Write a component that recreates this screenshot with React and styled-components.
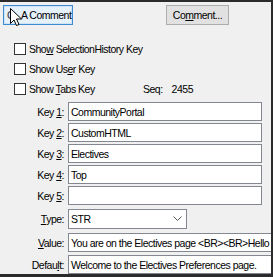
import React from 'react';
import styled, { createGlobalStyle } from 'styled-components';

const GlobalStyle = createGlobalStyle`
    html, body {
        margin: 0;
        padding: 0;
        background: #f0f0f0;
        overflow: hidden;
    }
`;

const Frame = styled.div`
    position: relative;
    width: 273px;
    height: 277px;
    box-sizing: border-box;
    border-top: 2px solid #2b2b2b;
    border-right: 2px solid #2b2b2b;
    border-bottom: 3px solid #2b2b2b;
    background: #f0f0f0;
    overflow: hidden;
    font-family: Tahoma, "Liberation Sans", Arial, sans-serif;
    font-size: 10.5px;
    letter-spacing: -0.5px;
    color: #000;
`;

const TopBar = styled.div`
    display: flex;
    align-items: center;
    padding: 3px 0 0 3px;
`;

const Button = styled.div`
    box-sizing: border-box;
    height: 20px;
    width: ${p => p.$w}px;
    margin-left: ${p => p.$ml || 0}px;
    padding-left: ${p => p.$active ? 3 : 0}px;
    display: flex;
    align-items: center;
    justify-content: ${p => p.$active ? 'flex-start' : 'center'};
    background: ${p => p.$active ? '#e5f1fb' : '#e1e1e1'};
    border: 1px solid ${p => p.$active ? '#3c8bd0' : '#adadad'};
    box-shadow: ${p => p.$active ? 'inset 0 0 0 1px #cfe3f5' : 'none'};
`;

const ButtonIcon = styled.span`
    display: inline-block;
    width: 14px;
    color: #333;
`;

const CheckList = styled.div`
    display: flex;
    flex-direction: column;
    gap: 8px;
    padding-left: 14px;
    margin-top: 18px;
`;

const CheckRow = styled.div`
    display: flex;
    align-items: center;
    height: 12px;
`;

const Box = styled.span`
    box-sizing: border-box;
    width: 12px;
    height: 12px;
    border: 1px solid #333;
    background: #fff;
    margin-right: 3px;
    flex: none;
`;

const CheckLabel = styled.span`
    width: ${p => p.$w ? `${p.$w}px` : 'auto'};
    white-space: nowrap;
`;

const Seq = styled.span`
    display: flex;
    gap: 9px;
`;

const Fields = styled.div`
    display: grid;
    grid-template-columns: 68px 1fr;
    margin-top: 7px;
`;

const Label = styled.div`
    height: ${p => p.$h || 19}px;
    margin-top: ${p => p.$mt || 0}px;
    padding-right: 4px;
    display: flex;
    align-items: center;
    justify-content: flex-end;
    white-space: nowrap;
`;

const Input = styled.div`
    box-sizing: border-box;
    height: ${p => p.$h || 19}px;
    margin-top: ${p => p.$mt || 0}px;
    width: ${p => p.$w}px;
    border: 1px solid #828790;
    background: #fff;
    padding-left: 2px;
    display: flex;
    align-items: center;
    white-space: nowrap;
    overflow: hidden;
`;

const Select = styled(Input)`
    justify-content: space-between;
    padding-right: 4px;
`;

const Cursor = styled.svg`
    position: absolute;
    left: 9px;
    top: 5px;
`;

const fields = [
    { label: 'Key', key: '1', value: 'CommunityPortal', mt: 0 },
    { label: 'Key', key: '2', value: 'CustomHTML', mt: 2 },
    { label: 'Key', key: '3', value: 'Electives', mt: 2 },
    { label: 'Key', key: '4', value: 'Top', mt: 2 },
    { label: 'Key', key: '5', value: '', mt: 2 },
];

export default function App() {
    return (
        <>
            <GlobalStyle />
            <Frame>
                <TopBar>
                    <Button $w={70} $active>
                        <ButtonIcon>C</ButtonIcon><span>A Comment</span>
                    </Button>
                    <Button $w={63} $ml={93}><span>Co<u>m</u>ment...</span></Button>
                </TopBar>
                <CheckList>
                    <CheckRow>
                        <Box /><CheckLabel>Sho<u>w</u> SelectionHistory Key</CheckLabel>
                    </CheckRow>
                    <CheckRow>
                        <Box /><CheckLabel>Show Us<u>e</u>r Key</CheckLabel>
                    </CheckRow>
                    <CheckRow>
                        <Box /><CheckLabel $w={114}>Show <u>T</u>abs Key</CheckLabel>
                        <Seq><span>Seq:</span><span>2455</span></Seq>
                    </CheckRow>
                </CheckList>
                <Fields>
                    {fields.map((f, i) => (
                        <React.Fragment key={i}>
                            <Label $mt={f.mt}><span>{f.label} <u>{f.key}</u>:</span></Label>
                            <Input $mt={f.mt} $w={194}>{f.value}</Input>
                        </React.Fragment>
                    ))}
                    <Label $mt={4} $h={20}><span><u>T</u>ype:</span></Label>
                    <Select $mt={4} $h={20} $w={119}>
                        <span>STR</span>
                        <svg width="9" height="6" viewBox="0 0 9 6">
                            <path d="M0.5 0.5 L4.5 4.5 L8.5 0.5" fill="none" stroke="#555" strokeWidth="1" />
                        </svg>
                    </Select>
                    <Label $mt={4}><span><u>V</u>alue:</span></Label>
                    <Input $mt={4} $w={240}>You are on the Electives page &lt;BR&gt;&lt;BR&gt;Hello</Input>
                    <Label $mt={3}><span>Defau<u>l</u>t:</span></Label>
                    <Input $mt={3} $w={240}>Welcome to the Electives Preferences page.</Input>
                </Fields>
                <Cursor width="14" height="20" viewBox="0 0 14 20">
                    <path d="M1.5 1.5 L1.5 16.5 L5 13 L7.5 18.5 L10 17.5 L7.5 12 L12.5 12 Z" fill="#fff" stroke="#000" strokeWidth="1" strokeLinejoin="round" />
                </Cursor>
            </Frame>
        </>
    );
}
